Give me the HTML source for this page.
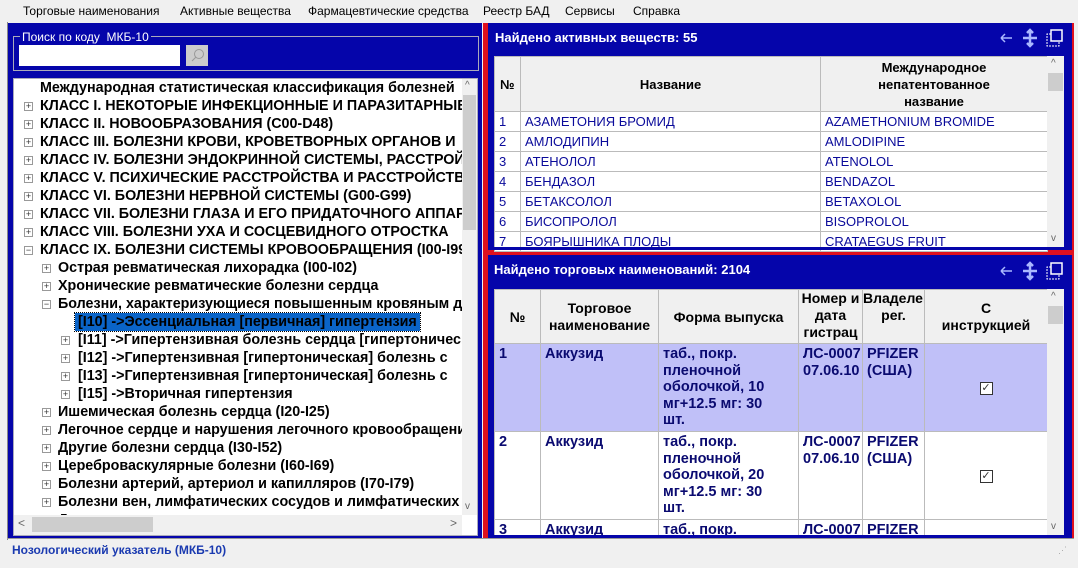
<!DOCTYPE html>
<html><head><meta charset="utf-8"><style>
*{box-sizing:border-box;margin:0;padding:0}
body{width:1078px;height:568px;background:#f0f0f0;font-family:"Liberation Sans",sans-serif;position:relative;overflow:hidden}
.a{position:absolute}
.menu span{position:absolute;top:4px;font-size:12px;color:#000}
.blue{background:#0505aa}
.tree{position:absolute;left:14px;top:79px;width:448px;height:436px;overflow:hidden}
.tree div{position:absolute;font-size:14.3px;font-weight:bold;white-space:nowrap;color:#000;height:18px;line-height:18px}
.pl{position:absolute;width:9px;height:9px;border:1px solid #999;background:#fff;font-size:9px;line-height:7px;text-align:center;color:#333;font-weight:normal}
table{border-collapse:collapse;position:absolute;table-layout:fixed}
td,th{border:1px solid #bbb;overflow:hidden;white-space:nowrap;font-size:13px}
th{background:#f0f0f0;font-weight:bold;color:#000}
.t1 td{height:20px;color:#0a0a9a;padding-left:4px;background:#fff}
.t2 td{vertical-align:top;color:#0a0a70;font-weight:bold;font-size:14.5px;padding:2px 4px;white-space:normal;line-height:16.6px}
.t2 th{font-size:14px}
.hd{position:absolute;color:#fff;font-weight:bold;font-size:13px}
.sb{position:absolute;background:#f0f0f0}
</style></head><body>
<div class="menu"><span style="left:23px">Торговые наименования</span><span style="left:180px">Активные вещества</span><span style="left:308px">Фармацевтические средства</span><span style="left:483px">Реестр БАД</span><span style="left:565px">Сервисы</span><span style="left:633px">Справка</span></div>
<div class="a" style="left:7px;top:22px;width:1px;height:518px;background:#888"></div>
<div class="a blue" style="left:8px;top:23px;width:474px;height:515px"></div>
<div class="a" style="left:13px;top:36px;width:466px;height:35px;border:1px solid #aab"></div>
<div class="a" style="left:20px;top:30px;background:#0505aa;color:#fff;font-size:12px;padding:0 2px">Поиск по коду&nbsp; МКБ-10</div>
<div class="a" style="left:19px;top:45px;width:161px;height:21px;background:#fff"></div>
<div class="a" style="left:186px;top:45px;width:22px;height:21px;background:#ccc"><svg width="22" height="21"><circle cx="13" cy="9" r="4.5" fill="none" stroke="#999"/><line x1="10" y1="12" x2="6" y2="16" stroke="#999"/></svg></div>
<div class="a" style="left:13px;top:78px;width:465px;height:458px;background:#fff;border:1px solid #aab"></div>
<div class="tree">
<div style="left:26px;top:0px">Международная статистическая классификация болезней</div>
<div style="left:26px;top:18px">КЛАСС I. НЕКОТОРЫЕ ИНФЕКЦИОННЫЕ И ПАРАЗИТАРНЫЕ</div>
<div style="left:26px;top:36px">КЛАСС II. НОВООБРАЗОВАНИЯ (C00-D48)</div>
<div style="left:26px;top:54px">КЛАСС III. БОЛЕЗНИ КРОВИ, КРОВЕТВОРНЫХ ОРГАНОВ И</div>
<div style="left:26px;top:72px">КЛАСС IV. БОЛЕЗНИ ЭНДОКРИННОЙ СИСТЕМЫ, РАССТРОЙСТВА</div>
<div style="left:26px;top:90px">КЛАСС V. ПСИХИЧЕСКИЕ РАССТРОЙСТВА И РАССТРОЙСТВА</div>
<div style="left:26px;top:108px">КЛАСС VI. БОЛЕЗНИ НЕРВНОЙ СИСТЕМЫ (G00-G99)</div>
<div style="left:26px;top:126px">КЛАСС VII. БОЛЕЗНИ ГЛАЗА И ЕГО ПРИДАТОЧНОГО АППАРАТА</div>
<div style="left:26px;top:144px">КЛАСС VIII. БОЛЕЗНИ УХА И СОСЦЕВИДНОГО ОТРОСТКА</div>
<div style="left:26px;top:162px">КЛАСС IX. БОЛЕЗНИ СИСТЕМЫ КРОВООБРАЩЕНИЯ (I00-I99)</div>
<div style="left:44px;top:180px">Острая ревматическая лихорадка (I00-I02)</div>
<div style="left:44px;top:198px">Хронические ревматические болезни сердца</div>
<div style="left:44px;top:216px">Болезни, характеризующиеся повышенным кровяным давлением</div>
<div style="left:61px;top:234px;background:#0a64c8;color:#000;padding:0 3px;outline:1px dotted #000">[I10] -&gt;Эссенциальная [первичная] гипертензия</div>
<div style="left:64px;top:252px">[I11] -&gt;Гипертензивная болезнь сердца [гипертоническая]</div>
<div style="left:64px;top:270px">[I12] -&gt;Гипертензивная [гипертоническая] болезнь с</div>
<div style="left:64px;top:288px">[I13] -&gt;Гипертензивная [гипертоническая] болезнь с</div>
<div style="left:64px;top:306px">[I15] -&gt;Вторичная гипертензия</div>
<div style="left:44px;top:324px">Ишемическая болезнь сердца (I20-I25)</div>
<div style="left:44px;top:342px">Легочное сердце и нарушения легочного кровообращения</div>
<div style="left:44px;top:360px">Другие болезни сердца (I30-I52)</div>
<div style="left:44px;top:378px">Цереброваскулярные болезни (I60-I69)</div>
<div style="left:44px;top:396px">Болезни артерий, артериол и капилляров (I70-I79)</div>
<div style="left:44px;top:414px">Болезни вен, лимфатических сосудов и лимфатических узлов</div>
<div style="left:44px;top:432px">Другие</div>
</div>
<div class="pl" style="left:24px;top:102px">+</div><div class="pl" style="left:24px;top:120px">+</div><div class="pl" style="left:24px;top:138px">+</div><div class="pl" style="left:24px;top:156px">+</div><div class="pl" style="left:24px;top:174px">+</div><div class="pl" style="left:24px;top:192px">+</div><div class="pl" style="left:24px;top:210px">+</div><div class="pl" style="left:24px;top:228px">+</div><div class="pl" style="left:24px;top:246px">−</div>
<div class="pl" style="left:42px;top:264px">+</div><div class="pl" style="left:42px;top:282px">+</div><div class="pl" style="left:42px;top:300px">−</div>
<div class="pl" style="left:61px;top:336px">+</div><div class="pl" style="left:61px;top:354px">+</div><div class="pl" style="left:61px;top:372px">+</div><div class="pl" style="left:61px;top:390px">+</div>
<div class="pl" style="left:42px;top:408px">+</div><div class="pl" style="left:42px;top:426px">+</div><div class="pl" style="left:42px;top:444px">+</div><div class="pl" style="left:42px;top:462px">+</div><div class="pl" style="left:42px;top:480px">+</div><div class="pl" style="left:42px;top:498px">+</div>
<div class="sb" style="left:462px;top:79px;width:15px;height:436px"></div>
<div class="a" style="left:463px;top:95px;width:13px;height:135px;background:#cdcdcd"></div>
<div class="a" style="left:465px;top:80px;font-size:10px;color:#666">^</div><div class="a" style="left:465px;top:501px;font-size:10px;color:#666">v</div>
<div class="sb" style="left:14px;top:515px;width:448px;height:20px"></div>
<div class="a" style="left:32px;top:517px;width:121px;height:15px;background:#cdcdcd"></div>
<div class="a" style="left:18px;top:516px;font-size:12px;color:#666">&lt;</div><div class="a" style="left:450px;top:516px;font-size:12px;color:#666">&gt;</div>
<div class="a" style="left:483px;top:23px;width:5px;height:515px;background:#e0101e"></div>
<div class="a" style="left:488px;top:250px;width:584px;height:5px;background:#e0101e"></div>
<div class="a" style="left:1072px;top:23px;width:2px;height:515px;background:#e0101e"></div>
<div class="a blue" style="left:488px;top:23px;width:584px;height:227px"></div>
<div class="hd" style="left:495px;top:30px">Найдено активных веществ: 55</div>
<svg class="a" style="left:996px;top:28px" width="70" height="20"><path d="M5 10h11M5 10l4-4M5 10l4 4" stroke="#aab8ff" stroke-width="1.5" fill="none"/><path d="M34 2v16M27 10h14M31 5l3-3 3 3M31 15l3 3 3-3" stroke="#aab8ff" stroke-width="2.5" fill="none"/><rect x="55" y="2" width="11" height="11" fill="none" stroke="#fff" stroke-width="1.5"/><path d="M55 6h-4v12h12v-4" fill="none" stroke="#fff" stroke-dasharray="2 1"/></svg>
<table class="t1" style="left:494px;top:56px;width:553px">
<colgroup><col style="width:26px"><col style="width:300px"><col style="width:227px"></colgroup>
<tr><th style="height:55px;text-align:left;padding-left:5px">№</th><th>Название</th><th style="white-space:normal;line-height:17px;padding:0 45px">Международное непатентованное название</th></tr>
<tr><td>1</td><td>АЗАМЕТОНИЯ БРОМИД</td><td>AZAMETHONIUM BROMIDE</td></tr>
<tr><td>2</td><td>АМЛОДИПИН</td><td>AMLODIPINE</td></tr>
<tr><td>3</td><td>АТЕНОЛОЛ</td><td>ATENOLOL</td></tr>
<tr><td>4</td><td>БЕНДАЗОЛ</td><td>BENDAZOL</td></tr>
<tr><td>5</td><td>БЕТАКСОЛОЛ</td><td>BETAXOLOL</td></tr>
<tr><td>6</td><td>БИСОПРОЛОЛ</td><td>BISOPROLOL</td></tr>
<tr><td>7</td><td>БОЯРЫШНИКА ПЛОДЫ</td><td>CRATAEGUS FRUIT</td></tr>
</table>
<div class="a" style="left:494px;top:247px;width:570px;height:3px;background:#0505aa"></div>
<div class="sb" style="left:1047px;top:56px;width:17px;height:191px"></div>
<div class="a" style="left:1048px;top:73px;width:15px;height:18px;background:#cdcdcd"></div>
<div class="a" style="left:1051px;top:58px;font-size:10px;color:#666">^</div><div class="a" style="left:1051px;top:233px;font-size:10px;color:#666">v</div>
<div class="a blue" style="left:488px;top:255px;width:584px;height:283px"></div>
<div class="hd" style="left:494px;top:262px">Найдено торговых наименований: 2104</div>
<svg class="a" style="left:996px;top:261px" width="70" height="20"><path d="M5 10h11M5 10l4-4M5 10l4 4" stroke="#aab8ff" stroke-width="1.5" fill="none"/><path d="M34 2v16M27 10h14M31 5l3-3 3 3M31 15l3 3 3-3" stroke="#aab8ff" stroke-width="2.5" fill="none"/><rect x="55" y="2" width="11" height="11" fill="none" stroke="#fff" stroke-width="1.5"/><path d="M55 6h-4v12h12v-4" fill="none" stroke="#fff" stroke-dasharray="2 1"/></svg>
<div class="a" style="left:494px;top:289px;width:553px;height:246px;overflow:hidden;background:#fff">
<table class="t2" style="left:0;top:0;width:553px">
<colgroup><col style="width:46px"><col style="width:118px"><col style="width:140px"><col style="width:64px"><col style="width:62px"><col style="width:123px"></colgroup>
<tr><th style="height:54px">№</th><th style="white-space:normal;line-height:17px">Торговое наименование</th><th>Форма выпуска</th><th style="white-space:normal;line-height:17px;vertical-align:top">Номер и дата гистрац</th><th style="white-space:normal;line-height:17px;vertical-align:top">Владелец рег.</th><th style="white-space:normal;line-height:17px;padding:0 12px">С инструкцией</th></tr>
<tr style="background:#c0c0f8"><td style="height:88px">1</td><td>Аккузид</td><td style="padding-right:20px">таб., покр. пленочной оболочкой, 10 мг+12.5 мг: 30 шт.</td><td style="white-space:nowrap">ЛС-0007<br>07.06.10</td><td>PFIZER (США)</td><td style="text-align:center;vertical-align:middle"><span style="display:inline-block;width:13px;height:13px;border:1px solid #333;background:#fff;font-size:11px;line-height:11px;color:#333;font-weight:normal">✓</span></td></tr>
<tr><td style="height:88px">2</td><td>Аккузид</td><td style="padding-right:20px">таб., покр. пленочной оболочкой, 20 мг+12.5 мг: 30 шт.</td><td style="white-space:nowrap">ЛС-0007<br>07.06.10</td><td>PFIZER (США)</td><td style="text-align:center;vertical-align:middle"><span style="display:inline-block;width:13px;height:13px;border:1px solid #333;background:#fff;font-size:11px;line-height:11px;color:#333;font-weight:normal">✓</span></td></tr>
<tr><td style="height:30px">3</td><td>Аккузид</td><td>таб., покр.</td><td>ЛС-0007</td><td>PFIZER</td><td></td></tr>
</table></div>
<div class="sb" style="left:1047px;top:289px;width:17px;height:246px"></div>
<div class="a" style="left:1048px;top:306px;width:15px;height:18px;background:#cdcdcd"></div>
<div class="a" style="left:1051px;top:291px;font-size:10px;color:#666">^</div><div class="a" style="left:1051px;top:521px;font-size:10px;color:#666">v</div>
<div class="a" style="left:7px;top:538px;width:1067px;height:1px;background:#999"></div>
<div class="a" style="left:12px;top:543px;font-size:12px;font-weight:bold;color:#1a3ab0">Нозологический указатель (МКБ-10)</div>
<div class="a" style="left:1058px;top:545px;font-size:9px;color:#aaa">⋰</div>
</body></html>
